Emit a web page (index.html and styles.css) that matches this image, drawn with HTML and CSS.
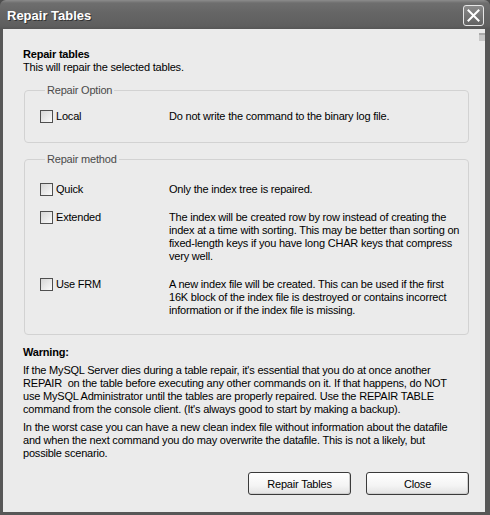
FILE: index.html
```html
<!DOCTYPE html>
<html lang="en">
<head>
    <meta charset="UTF-8">
    <title>Repair Tables</title>
    <link rel="stylesheet" href="styles.css">
</head>
<body>

    <div class="window">
        <!-- Title bar -->
        <div class="titlebar">
            <span class="title">Repair Tables</span>
            <button class="close-x" aria-label="Close">
                <svg width="13" height="13" viewBox="0 0 13 13">
                    <path d="M1.5 1.5 L11.5 11.5 M11.5 1.5 L1.5 11.5" stroke="#fff" stroke-width="2" stroke-linecap="square"/>
                </svg>
            </button>
        </div>

        <div class="client">
            <span class="grip"></span>

            <div class="intro">
                <div class="intro-title">Repair tables</div>
                <div>This will repair the selected tables.</div>
            </div>

            <!-- Repair option -->
            <fieldset class="group group-option">
                <legend>Repair Option</legend>
                <div class="opt-row">
                    <label class="check"><span class="box"></span>Local</label>
                    <div class="desc">Do not write the command to the binary log file.</div>
                </div>
            </fieldset>

            <!-- Repair method -->
            <fieldset class="group group-method">
                <legend>Repair method</legend>
                <div class="opt-row">
                    <label class="check"><span class="box"></span>Quick</label>
                    <div class="desc">Only the index tree is repaired.</div>
                </div>
                <div class="opt-row">
                    <label class="check"><span class="box"></span>Extended</label>
                    <div class="desc">The index will be created row by row instead of creating the<br>
                        index at a time with sorting. This may be better than sorting on<br>
                        fixed-length keys if you have long CHAR keys that compress<br>
                        very well.</div>
                </div>
                <div class="opt-row">
                    <label class="check"><span class="box"></span>Use FRM</label>
                    <div class="desc">A new index file will be created. This can be used if the first<br>
                        16K block of the index file is destroyed or contains incorrect<br>
                        information or if the index file is missing.</div>
                </div>
            </fieldset>

            <div class="warning-title">Warning:</div>
            <p class="note">If the MySQL Server dies during a table repair, it's essential that you do at once another<br>
                REPAIR&nbsp; on the table before executing any other commands on it. If that happens, do NOT<br>
                use MySQL Administrator until the tables are properly repaired. Use the REPAIR TABLE<br>
                command from the console client. (It's always good to start by making a backup).</p>
            <p class="note">In the worst case you can have a new clean index file without information about the datafile<br>
                and when the next command you do may overwrite the datafile. This is not a likely, but<br>
                possible scenario.</p>

            <div class="buttons">
                <button class="btn">Repair Tables</button>
                <button class="btn">Close</button>
            </div>
        </div>
    </div>

</body>
</html>
```

FILE: styles.css
```css
/* Basic reset */
* {
    margin: 0;
    padding: 0;
    box-sizing: border-box;
}

body {
    font-family: "Liberation Sans", Arial, sans-serif;
    font-size: 11px;
    letter-spacing: -0.2px;
    color: #000;
    background: #4e4e4e;
}

/* Window frame */
.window {
    width: 490px;
    height: 515px;
    display: flex;
    flex-direction: column;
    background: #575757;
    border-radius: 6px 6px 0 0;
    overflow: hidden;
}

.titlebar {
    height: 29px;
    flex-shrink: 0;
    display: flex;
    align-items: center;
    justify-content: space-between;
    padding: 0 6px 0 7px;
    background: linear-gradient(to bottom, #8c8c8c 0, #6e6e6e 3px, #666 12px, #5e5e5e 26px, #555 29px);
}

.title {
    color: #fff;
    font-weight: bold;
    font-size: 13px;
    letter-spacing: 0;
    text-shadow: 1px 1px 0 #333;
    margin-top: 1px;
}

.close-x {
    width: 21px;
    height: 21px;
    border: 1px solid #e6e6e6;
    border-radius: 3px;
    background: linear-gradient(to bottom, #8a8a8a, #626262);
    display: flex;
    align-items: center;
    justify-content: center;
    margin-top: 2px;
}

/* Client area */
.client {
    position: relative;
    flex: 1;
    margin: 0 5px 3px 3px;
    background: #ebebeb;
    padding: 19px 16px 0 20px;
    display: flex;
    flex-direction: column;
}

.grip {
    position: absolute;
    top: 4px;
    right: 0;
    width: 6px;
    height: 8px;
    background: #c8c8c8;
    border-top: 2px solid #a9a9a9;
}

.intro {
    line-height: 13px;
}

.intro-title {
    font-weight: bold;
}

/* Group boxes */
.group {
    border: 1px solid #d2d2d2;
    border-radius: 4px;
    margin-left: 1px;
    padding: 13px 4px 19px 15px;
}

.group legend {
    color: #4a4a4a;
    line-height: 13px;
    padding: 0 2px;
    margin-left: 5px;
}

.group-option {
    margin-top: 10px;
}

.group-method {
    margin-top: 10px;
    padding-top: 17px;
    padding-bottom: 17px;
}

.opt-row {
    display: flex;
    line-height: 13px;
}

.opt-row + .opt-row {
    margin-top: 15px;
}

.check {
    width: 129px;
    flex-shrink: 0;
    display: flex;
    align-items: flex-start;
}

.box {
    width: 13px;
    height: 13px;
    border: 1px solid #4f4f4f;
    background: linear-gradient(135deg, #d6d6d6, #fafafa);
    margin-right: 3px;
}

.desc {
    flex: 1;
    white-space: nowrap;
}

/* Warning text */
.warning-title {
    font-weight: bold;
    line-height: 13px;
    margin-top: 11px;
}

.note {
    line-height: 13px;
    margin-top: 5px;
    white-space: nowrap;
}

/* Buttons */
.buttons {
    display: flex;
    justify-content: flex-end;
    gap: 15px;
    margin-top: 12px;
}

.btn {
    width: 103px;
    height: 23px;
    font-family: inherit;
    font-size: 11px;
    letter-spacing: inherit;
    color: #000;
    border: 1px solid #3a3a3a;
    border-radius: 3px;
    background: linear-gradient(to bottom, #ffffff 0, #f4f4f4 60%, #e2e2e2 100%);
    box-shadow: inset -1px -1px 0 #cfcfcf;
}
```
